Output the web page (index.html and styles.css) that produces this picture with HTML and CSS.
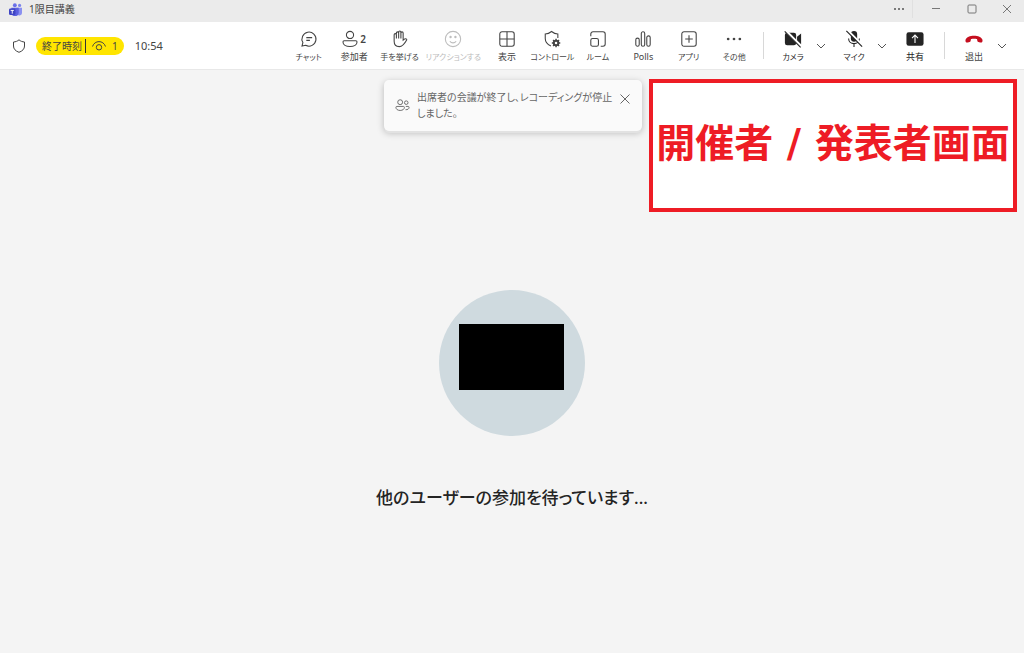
FILE: index.html
```html
<!DOCTYPE html>
<html lang="ja">
<head>
<meta charset="utf-8">
<meta name="viewport" content="width=device-width, initial-scale=1">
<title>1限目講義</title>
<link rel="stylesheet" href="styles.css">
</head>
<body>
<div class="app">
  <header class="titlebar">
    <svg class="logo" viewBox="0 0 14 14" aria-hidden="true">
      <circle cx="6.300" cy="2.400" r="2.100" fill="#6a70e8"/>
      <circle cx="11.400" cy="2.600" r="1.700" fill="#7b83eb"/>
      <path d="M8 5h6v5.500a2.800 2.800 0 0 1-5 1.800z" fill="#8a90f0"/>
      <path d="M2.500 5h8v5.200a3.800 3.800 0 0 1-8 0z" fill="#5b60e0"/>
      <rect x="0" y="6" width="7" height="7" rx="1.500" fill="#3f45c4"/>
      <path d="M1.800 8h3.400M3.500 8v3.500" stroke="#fff" fill="none"/>
    </svg>
    <h1 class="title">1限目講義</h1>
    <div class="window-controls">
      <button class="win more" aria-label="設定など"><svg viewBox="0 0 12 12"><g fill="#555" stroke="none"><circle cx="2" cy="6" r="1"/><circle cx="6" cy="6" r="1"/><circle cx="10" cy="6" r="1"/></g></svg></button>
      <button class="win" aria-label="最小化"><svg viewBox="0 0 12 12"><path d="M2 5.500h8"/></svg></button>
      <button class="win" aria-label="最大化"><svg viewBox="0 0 12 12"><rect x="2" y="2" width="8" height="8" rx="1"/></svg></button>
      <button class="win" aria-label="閉じる"><svg viewBox="0 0 12 12"><path d="M2 2l8 8M10 2l-8 8"/></svg></button>
    </div>
  </header>

  <nav class="toolbar">
    <div class="status">
      <svg class="shield" viewBox="0 0 14 14" aria-hidden="true"><path d="M7 .8C8.500 2.200 10.500 2.900 12.500 3v4c0 3-2 5-5.500 6.300C3.500 12 1.500 10 1.500 7V3C3.500 2.900 5.500 2.200 7 .8z"/></svg>
      <div class="pill">
        <span class="pill-text">終了時刻</span>
        <svg class="eye" viewBox="0 0 16 12" aria-hidden="true"><path d="M1.500 6.500C3.500 0 12.500 0 14.500 6.500"/><circle cx="8" cy="7.300" r="2.700"/></svg>
        <span>1</span>
      </div>
      <time class="clock">10:54</time>
    </div>

    <div class="commands">
      <button class="cmd"><svg viewBox="0 0 20 20"><path d="M2.200 17.800l1-3.800A7.800 7.800 0 1 1 6.300 17zM7 8.500h6.500M7 11.500h4"/></svg><span class="kana">チャット</span></button>
      <button class="cmd"><span class="icon-row"><svg viewBox="0 0 20 20"><circle cx="10" cy="5.500" r="4"/><path d="M3.500 12h13c.8 0 1.300.6 1.300 1.300 0 3-3.300 5-7.800 5s-7.800-2-7.800-5c0-.7.500-1.300 1.300-1.300z"/></svg><b class="count">2</b></span><span>参加者</span></button>
      <button class="cmd"><svg viewBox="0 0 20 20"><path d="M3.500 10V5.300a1.200 1.200 0 0 1 2.500 0V3.300a1.200 1.200 0 0 1 2.500 0v-1a1.200 1.200 0 0 1 2.500 0v1a1.200 1.200 0 0 1 2.500 0v7.900l1.800-1.300c1-.7 2.600.3 2.100 1.300-1.600 3-3.900 7.300-8.200 7.300-4.200 0-5.700-3-5.700-6z"/><path d="M6 5v4.500M8.500 3v6.500M11 3v6.500"/></svg><span class="kana">手を挙げる</span></button>
      <button class="cmd wide" disabled><svg viewBox="0 0 20 20"><circle cx="10" cy="10" r="8.500"/><path d="M6.500 12.500c1.800 2.400 5.200 2.400 7 0"/><circle cx="7.300" cy="7.800" r=".7" fill="currentColor"/><circle cx="12.700" cy="7.800" r=".7" fill="currentColor"/></svg><span class="kana">リアクションする</span></button>
      <button class="cmd"><svg viewBox="0 0 20 20"><rect x="2" y="2" width="16" height="16" rx="2.500"/><path d="M10 2v16M2 10h16"/></svg><span>表示</span></button>
      <button class="cmd"><svg viewBox="0 0 20 20"><path d="M16.500 9V4.500C14 4.400 11.800 3.500 9.500 1.700 7.200 3.500 5 4.400 2.500 4.500V9.500c0 4 2.500 6.700 6.300 8.300"/><circle cx="14.500" cy="14.500" r="2.500" stroke-width="2.200"/><path d="M14.500 9.800v2M14.500 17.200v2M9.800 14.500h2M17.200 14.500h2M11.200 11.200l1.300 1.300M16.500 16.500l1.300 1.300M17.800 11.200l-1.300 1.300M12.500 16.500l-1.300 1.300" stroke-width="1.600"/></svg><span class="kana">コントロール</span></button>
      <button class="cmd"><svg viewBox="0 0 20 20"><path d="M2 7V4.500A2.500 2.500 0 0 1 4.500 2h11A2.500 2.500 0 0 1 18 4.500v11a2.500 2.500 0 0 1-2.500 2.500H13"/><rect x="2" y="9.500" width="8.500" height="8.500" rx="2"/></svg><span class="kana">ルーム</span></button>
      <button class="cmd"><svg viewBox="0 0 20 20"><rect x="2" y="9" width="3.800" height="9" rx="1.900"/><rect x="8.100" y="2" width="3.800" height="16" rx="1.900"/><rect x="14.200" y="6.500" width="3.800" height="11.500" rx="1.900"/></svg><span>Polls</span></button>
      <button class="cmd"><svg viewBox="0 0 20 20"><rect x="2" y="2" width="16" height="16" rx="2.500"/><path d="M10 5.800v8.400M5.800 10h8.400"/></svg><span class="kana">アプリ</span></button>
      <button class="cmd"><svg viewBox="0 0 20 20"><g fill="currentColor" stroke="none"><circle cx="3.500" cy="10" r="1.500"/><circle cx="10" cy="10" r="1.500"/><circle cx="16.500" cy="10" r="1.500"/></g></svg><span class="kana">その他</span></button>
    </div>

    <div class="devices">
      <button class="cmd strong"><svg viewBox="0 0 20 20"><path d="M3 3h8a2.500 2.500 0 0 1 2.500 2.500v9A2.500 2.500 0 0 1 11 17H3.500A2.500 2.500 0 0 1 1 14.500v-9A2.500 2.500 0 0 1 3 3zM14.500 7.500L19 4v12l-4.500-3.500z" fill="currentColor" stroke="none"/><path d="M1.500.5l18 18" stroke="#fff" stroke-width="3"/><path d="M.8 1.500l17.700 17.700"/></svg><span class="kana">カメラ</span></button>
      <button class="chev" aria-label="カメラのオプション"><svg viewBox="0 0 10 10"><path d="M1 3l4 4 4-4"/></svg></button>
      <button class="cmd strong"><svg viewBox="0 0 20 20"><rect x="6.500" y="1" width="7" height="12" rx="3.500" fill="currentColor" stroke="none"/><path d="M4 9.500c0 7.500 12 7.500 12 0M10 15.500V19"/><path d="M2.500 0l17 17" stroke="#fff" stroke-width="2.500"/><path d="M1.500 1l17.500 17.500"/></svg><span class="kana">マイク</span></button>
      <button class="chev" aria-label="マイクのオプション"><svg viewBox="0 0 10 10"><path d="M1 3l4 4 4-4"/></svg></button>
      <button class="cmd strong"><svg viewBox="0 0 20 20"><rect x=".5" y="2.500" width="19" height="15" rx="2.500" fill="currentColor" stroke="none"/><path d="M10 14.500V6M6.700 9L10 5.700 13.300 9" stroke="#fff"/></svg><span>共有</span></button>
    </div>

    <div class="leave">
      <button class="cmd"><svg viewBox="0 0 20 20"><path d="M10 6.300c4.500 0 8.300 1.600 9.300 4.200.4 1.300.2 2.700-.8 3.300-1 .3-3.300-.2-4.300-.8-.9-.7-.4-2.400-1-2.900-1.200-.6-5.200-.6-6.400 0-.6.5-.1 2.200-1 2.900-1 .6-3.300 1.100-4.300.8-1-.6-1.200-2-.8-3.300 1-2.600 4.800-4.200 9.300-4.200z" fill="#c50f1f" stroke="none"/></svg><span>退出</span></button>
      <button class="chev" aria-label="退出のオプション"><svg viewBox="0 0 10 10"><path d="M1 3l4 4 4-4"/></svg></button>
    </div>
  </nav>

  <main class="stage">
    <section class="toast" role="status">
      <svg class="toast-icon" viewBox="0 0 16 14" aria-hidden="true"><circle cx="5.500" cy="4" r="2.600"/><circle cx="12" cy="4.500" r="1.900"/><path d="M2 8.500h7c.6 0 1 .4 1 1 0 2-1.800 3.300-4.500 3.300S1 11.500 1 9.500c0-.6.400-1 1-1zM11.500 8.500H14c.6 0 1 .4 1 1 0 1.700-1.500 2.700-3.800 2.500"/></svg>
      <p class="toast-text">出席者の会議が終了し、レコーディングが停止しました。</p>
      <button class="toast-close" aria-label="通知を閉じる"><svg viewBox="0 0 12 12"><path d="M1.500 1.500l9 9M10.500 1.500l-9 9"/></svg></button>
    </section>
    <aside class="callout">開催者 / 発表者画面</aside>
    <div class="waiting">
      <div class="avatar"><div class="mask"></div></div>
      <p class="waiting-text">他のユーザーの参加を待っています...</p>
    </div>
  </main>
</div>
</body>
</html>
```
FILE: styles.css
```css
* {
  box-sizing: border-box;
}

body {
  margin: 0;
  font-family: "Noto Sans", "Noto Sans CJK JP", sans-serif;
  font-feature-settings: "palt";
  color: #444;
  background: #f4f4f4;
}

button {
  margin: 0;
  padding: 0;
  border: 0;
  background: none;
  font: inherit;
  color: inherit;
}

svg {
  display: block;
  flex: none;
  fill: none;
  stroke: currentColor;
}

.app {
  display: flex;
  flex-direction: column;
  min-height: 100vh;
}

.titlebar {
  display: flex;
  align-items: center;
  height: 22px;
  padding: 0 0 4px 9px;
  background: #ebebeb;
}

.logo {
  width: 13px;
  height: 13px;
  stroke: none;
}

.title {
  margin: 0 0 0 7px;
  font-size: 10px;
  font-weight: 400;
  line-height: 14px;
}

.window-controls {
  display: flex;
  margin-left: auto;
}

.win {
  display: grid;
  place-items: center;
  width: 36px;
  height: 18px;
  color: #777;
}

.win svg {
  width: 12px;
  height: 12px;
}

.more {
  width: 28px;
  border-right: 1px solid #e0e0e0;
  margin-right: 5px;
}

.win:last-child {
  width: 34px;
}

.toolbar {
  display: flex;
  align-items: center;
  height: 48px;
  padding: 0 12px;
  background: #fff;
  border-bottom: 1px solid #e8e8e8;
}

.status {
  display: flex;
  align-items: center;
  flex: 1;
}

.shield {
  width: 14px;
  height: 14px;
}

.pill {
  display: flex;
  align-items: center;
  gap: 5px;
  height: 18px;
  margin: 0 11px 0 10px;
  padding: 0 6px;
  border-radius: 9px;
  background: #ffe500;
  font-size: 10px;
  line-height: 14px;
}

.pill-text {
  padding-right: 3px;
  border-right: 1px solid #333;
}

.eye {
  width: 16px;
  height: 12px;
}

.clock {
  font-size: 11px;
}

.commands {
  display: flex;
  width: 471px;
}

.cmd {
  display: flex;
  flex-direction: column;
  align-items: center;
  gap: 2px;
  flex: 1 1 0;
  min-width: 0;
  padding-top: 3px;
  font-size: 9px;
  line-height: 14px;
  white-space: nowrap;
}

.cmd svg {
  width: 18px;
  height: 18px;
  stroke-width: 1.2;
}

.kana {
  font-size: 8px;
}

.wide {
  flex: 0 0 62px;
}

.cmd:disabled {
  color: #bdbdbd;
}

.icon-row {
  position: relative;
  display: flex;
  margin-right: 8px;
}

.count {
  position: absolute;
  left: 19px;
  top: 2px;
  font-size: 10px;
  font-weight: 600;
}

.strong {
  color: #242424;
}

.devices,
.leave {
  display: flex;
  align-items: center;
}

.devices {
  margin-left: 6px;
}

.devices::before,
.leave::before {
  content: "";
  width: 1px;
  height: 27px;
  background: #d8d8d8;
}

.devices .cmd,
.leave .cmd {
  flex: 0 0 46px;
}

.devices::before {
  margin-right: 6px;
}

.leave::before {
  margin: 0 6px;
}

.chev {
  width: 15px;
  color: #555;
}

.chev svg {
  width: 10px;
  height: 10px;
}

.stage {
  position: relative;
  display: flex;
  flex: 1;
  flex-direction: column;
  align-items: center;
  justify-content: center;
}

.toast {
  position: absolute;
  top: 10px;
  left: calc(50% - 128px);
  display: flex;
  align-items: center;
  width: 258px;
  padding: 9px 11px 10px;
  border-radius: 5px;
  background: #fafafa;
  color: #666;
  box-shadow: 0 3px 0 -1px #e2e2e2, 0 2px 7px rgba(0, 0, 0, 0.25);
}

.toast-icon {
  width: 15px;
  height: 14px;
}

.toast-text {
  flex: 1;
  margin: 0 2px 0 7px;
  font-size: 10px;
  line-height: 16px;
}

.toast-close {
  align-self: flex-start;
  padding-top: 4px;
}

.toast-close svg {
  width: 12px;
  height: 12px;
}

.callout {
  position: absolute;
  top: 9px;
  right: 7px;
  display: flex;
  align-items: center;
  justify-content: center;
  width: 368px;
  height: 133px;
  padding-bottom: 4px;
  border: 4px solid #ee1c25;
  background: #fff;
  color: #ee1c25;
  font-family: "DejaVu Sans", "Noto Sans CJK JP", sans-serif;
  font-feature-settings: normal;
  font-size: 39px;
  font-weight: 700;
  line-height: 48px;
  white-space: nowrap;
}

.waiting {
  display: flex;
  flex-direction: column;
  align-items: center;
  gap: 48px;
  padding-top: 78px;
}

.avatar {
  display: flex;
  justify-content: center;
  width: 146px;
  height: 146px;
  padding-top: 34px;
  border-radius: 50%;
  background: #cfdadf;
}

.mask {
  width: 105px;
  height: 66px;
  background: #000;
}

.waiting-text {
  margin: 0;
  font-size: 17px;
  font-weight: 500;
  line-height: 28px;
  color: #242424;
}
```
